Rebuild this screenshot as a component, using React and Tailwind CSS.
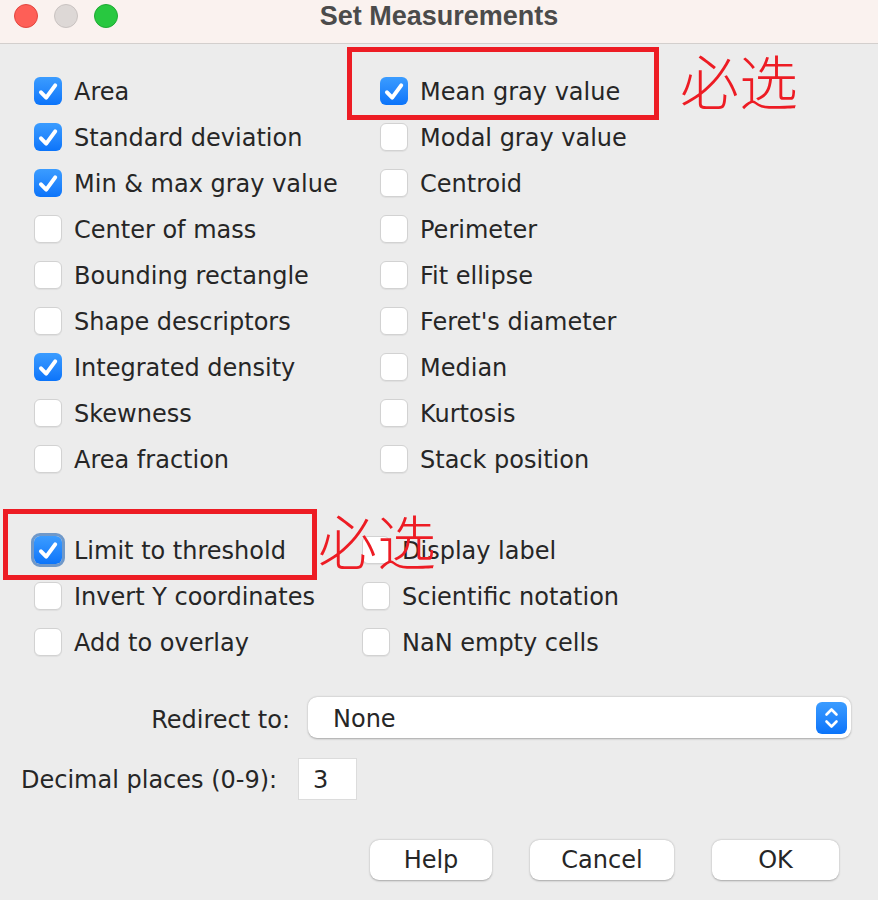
import React from "react";

const topRows = [
  ["Area", true, "Mean gray value", true],
  ["Standard deviation", true, "Modal gray value", false],
  ["Min & max gray value", true, "Centroid", false],
  ["Center of mass", false, "Perimeter", false],
  ["Bounding rectangle", false, "Fit ellipse", false],
  ["Shape descriptors", false, "Feret's diameter", false],
  ["Integrated density", true, "Median", false],
  ["Skewness", false, "Kurtosis", false],
  ["Area fraction", false, "Stack position", false],
];

const bottomRows = [
  ["Limit to threshold", true, "Display label", false],
  ["Invert Y coordinates", false, "Scientific notation", false],
  ["Add to overlay", false, "NaN empty cells", false],
];

function Box({ checked, focus }) {
  if (checked) {
    return (
      <span
        className={
          "w-[28px] h-[28px] shrink-0 rounded-[6px] bg-gradient-to-b from-[#3b9cff] to-[#0a74fa] flex items-center justify-center" +
          (focus ? " outline-[3px] outline outline-[#6f98c9]" : "")
        }
      >
        <svg width="28" height="28" viewBox="0 0 28 28">
          <path
            d="M7 15.3 L12.2 20.6 L21.2 8.4"
            fill="none"
            stroke="white"
            strokeWidth="4"
            strokeLinecap="round"
            strokeLinejoin="round"
          />
        </svg>
      </span>
    );
  }
  return (
    <span className="w-[28px] h-[28px] shrink-0 rounded-[6px] bg-white border border-[#d2d2d2] shadow-[0_1px_1px_rgba(0,0,0,0.06)]" />
  );
}

function Item({ label, checked, focus }) {
  return (
    <div className="h-[46px] flex items-center gap-[12px]">
      <Box checked={checked} focus={focus} />
      <span className="pt-[2px]">{label}</span>
    </div>
  );
}

function Btn({ children, w }) {
  return (
    <button
      className={
        "h-[40px] bg-white rounded-[9px] shadow-[0_0.5px_2px_rgba(0,0,0,0.3)] text-[24px] text-[#262626] " +
        w
      }
    >
      {children}
    </button>
  );
}

export default function App() {
  return (
    <div className="relative w-[878px] h-[900px] bg-[#ececec] text-[24px] text-[#262626] font-['DejaVu_Sans',sans-serif] overflow-hidden">
      {/* title bar */}
      <div className="relative h-[44px] bg-[#faf2ef] border-b border-[#d3cfcd]">
        <div className="flex gap-[16px] pl-[14px] pt-[4px]">
          <span className="w-[24px] h-[24px] rounded-full bg-[#fe5f57] border border-[#e2463f]" />
          <span className="w-[24px] h-[24px] rounded-full bg-[#ddd8d6] border border-[#c9c3c1]" />
          <span className="w-[24px] h-[24px] rounded-full bg-[#28c840] border border-[#1eaa33]" />
        </div>
        <div className="absolute inset-x-0 top-0 h-[32px] flex items-center justify-center font-['Liberation_Sans',sans-serif] font-bold text-[27px] text-[#4b4b4b]">
          Set Measurements
        </div>
      </div>

      {/* measurements */}
      <div className="pl-[34px] pt-[24px] grid grid-cols-[346px_1fr]">
        {topRows.map(([a, ac, b, bc]) => (
          <React.Fragment key={a}>
            <Item label={a} checked={ac} />
            <Item label={b} checked={bc} />
          </React.Fragment>
        ))}
      </div>

      <div className="h-[45px]" />

      <div className="pl-[34px] grid grid-cols-[328px_1fr]">
        {bottomRows.map(([a, ac, b, bc], i) => (
          <React.Fragment key={a}>
            <Item label={a} checked={ac} focus={i === 0} />
            <Item label={b} checked={bc} />
          </React.Fragment>
        ))}
      </div>

      {/* redirect */}
      <div className="mt-[32px] flex items-center">
        <div className="w-[290px] text-right pt-[5px]">Redirect to:</div>
        <div className="ml-[18px] w-[543px] h-[41px] bg-white rounded-[9px] shadow-[0_0.5px_2px_rgba(0,0,0,0.3)] flex items-center justify-between pl-[25px] pr-[4px]">
          <span className="pt-[3px]">None</span>
          <span className="w-[31px] h-[32px] rounded-[6px] bg-gradient-to-b from-[#3b9cff] to-[#0a74fa]">
            <svg width="31" height="32" viewBox="0 0 31 32">
              <path d="M10.5 12.5 L15.5 7.5 L20.5 12.5" fill="none" stroke="white" strokeWidth="2.6" strokeLinecap="round" strokeLinejoin="round" />
              <path d="M10.5 19.5 L15.5 24.5 L20.5 19.5" fill="none" stroke="white" strokeWidth="2.6" strokeLinecap="round" strokeLinejoin="round" />
            </svg>
          </span>
        </div>
      </div>

      {/* decimal places */}
      <div className="mt-[20px] pl-[21px] flex items-center gap-[8px]">
        <span className="w-[269px] pt-[2px]">Decimal places (0-9):</span>
        <div className="w-[59px] h-[42px] bg-white border border-[#dcdcdc] flex items-center pl-[14px] pt-[2px]">
          3
        </div>
      </div>

      {/* buttons */}
      <div className="mt-[40px] pl-[370px] flex gap-[38px]">
        <Btn w="w-[122px]">Help</Btn>
        <Btn w="w-[144px]">Cancel</Btn>
        <Btn w="w-[127px]">OK</Btn>
      </div>

      {/* annotations */}
      <div className="absolute left-[347px] top-[47px] w-[312px] h-[73px] border-[5px] border-[#ed1c24]" />
      <div className="absolute left-[680px] top-[50px] text-[59px] leading-none text-[#ed1c24] font-['Noto_Sans_CJK_SC',sans-serif] font-light">
        必选
      </div>
      <div className="absolute left-[3px] top-[509px] w-[314px] h-[71px] border-[5px] border-[#ed1c24]" />
      <div className="absolute left-[318px] top-[510px] text-[59px] leading-none text-[#ed1c24] font-['Noto_Sans_CJK_SC',sans-serif] font-light">
        必选
      </div>
    </div>
  );
}
